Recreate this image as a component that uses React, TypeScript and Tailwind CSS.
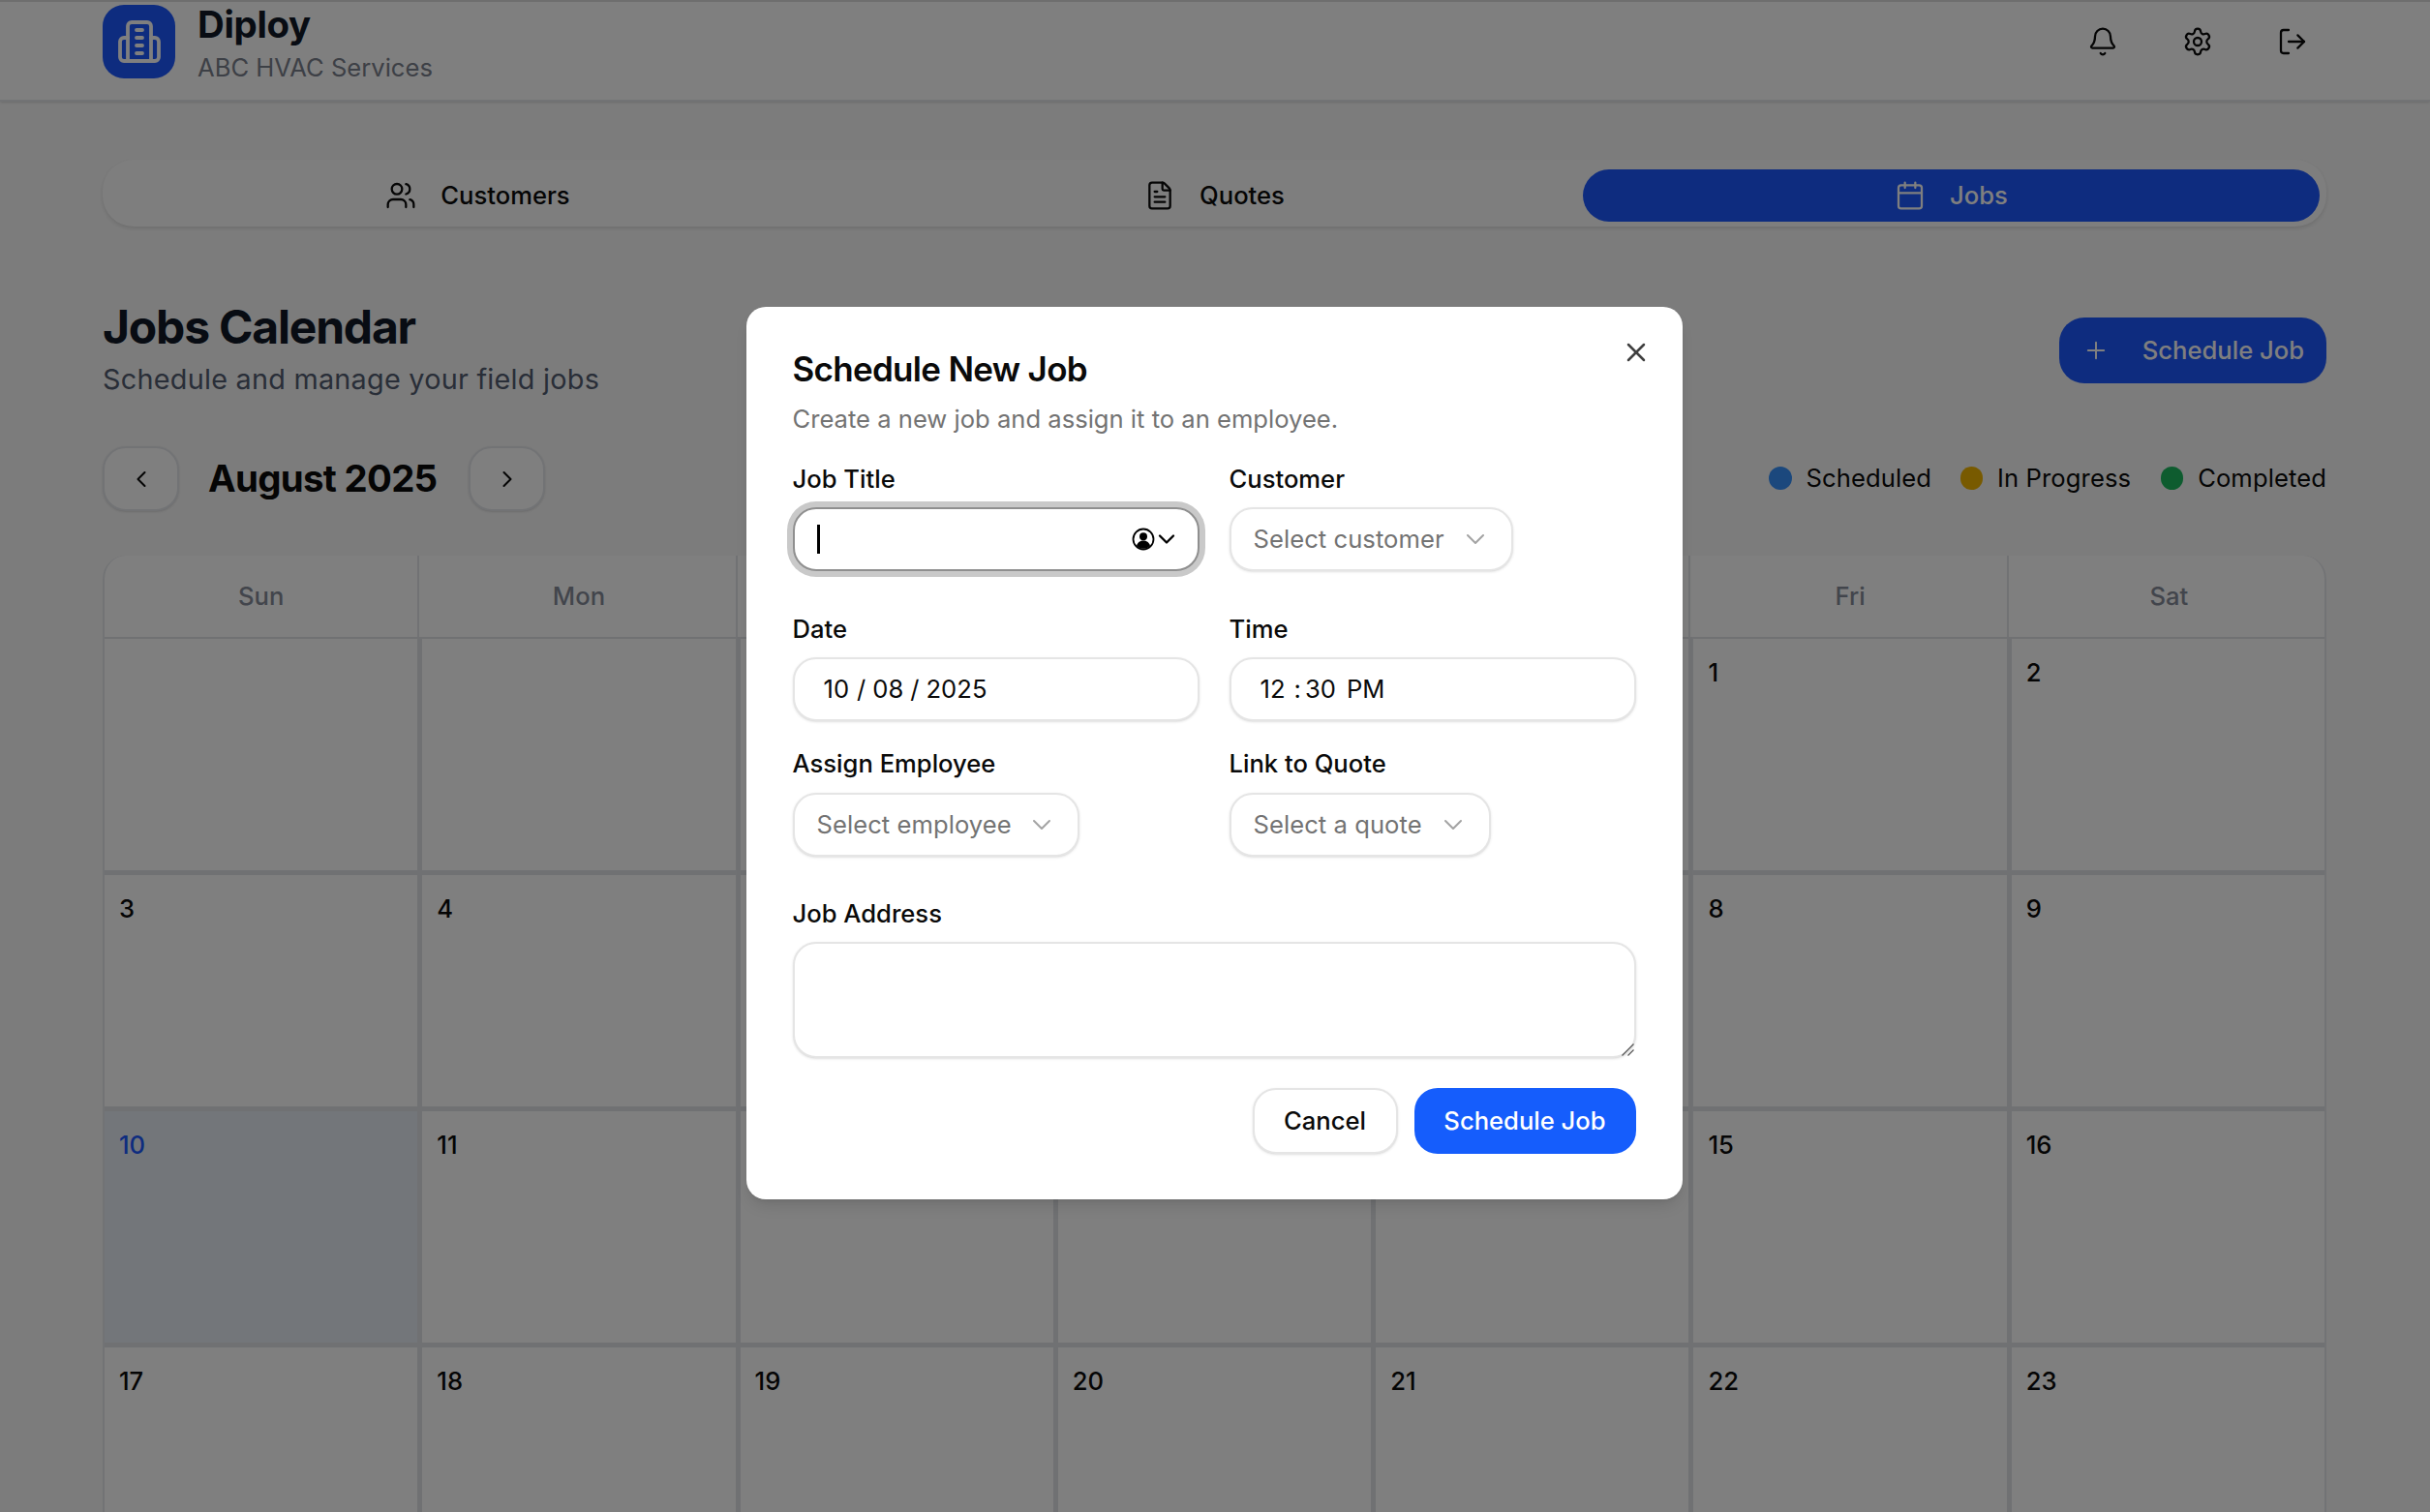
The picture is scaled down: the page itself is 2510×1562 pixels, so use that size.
import { Bell, Calendar, ChevronDown, ChevronLeft, ChevronRight, FileText, LogOut, Plus, Settings, Users, X } from 'lucide-react';
import type { ReactNode } from 'react';

const days = ['Sun', 'Mon', 'Tue', 'Wed', 'Thu', 'Fri', 'Sat'];
const cells = [null, null, null, null, null, 1, 2, 3, 4, 5, 6, 7, 8, 9, 10, 11, 12, 13, 14, 15, 16, 17, 18, 19, 20, 21, 22, 23];

const Logo = () => (
  <svg width="48" height="48" viewBox="0 0 24 24" fill="none" stroke="white" strokeWidth="1.9" strokeLinecap="round" strokeLinejoin="round">
    <path d="M6 22V4a2 2 0 0 1 2-2h8a2 2 0 0 1 2 2v18Z" />
    <path d="M6 10H4a2 2 0 0 0-2 2v8a2 2 0 0 0 2 2h2" />
    <path d="M18 10h2a2 2 0 0 1 2 2v8a2 2 0 0 1-2 2h-2" />
    <path d="M10.5 6h3M10.5 10h3M10.5 14h3M10.5 18h3" />
  </svg>
);

const Label = ({ children }: { children: string }) => (
  <div className="text-[25.6px] leading-[36px] font-medium text-[#0a0a0a]">{children}</div>
);

const SelectBox = ({ text, width }: { text: string; width: string }) => (
  <div className={`${width} h-[66px] flex items-center justify-between pl-[23px] pr-[21px] bg-white border-2 border-[#e5e5e5] rounded-[24px] shadow-sm text-[25.6px] text-[#737373] tracking-[0.05px]`}>
    <span>{text}</span>
    <ChevronDown size={32} strokeWidth={1.5} className="text-[#a3a3a3]" />
  </div>
);

const TextBox = ({ children }: { children: ReactNode }) => (
  <div className="w-[420px] h-[66px] flex items-center pl-[30px] bg-white border-2 border-[#e5e5e5] rounded-[24px] shadow-sm text-[25.6px] text-[#0a0a0a]">
    {children}
  </div>
);

const Modal = () => (
  <div className="absolute inset-0 bg-black/50 flex items-center justify-center pb-[6px] pr-[2px]">
    <div className="relative w-[967px] h-[922px] bg-white rounded-[20px] shadow-lg px-[48px] pt-[43px]">
      <X size={32} strokeWidth={1.9} className="absolute right-[32px] top-[31px] text-[#404040]" />
      <h2 className="text-[35px] leading-[42px] font-semibold text-[#0a0a0a] tracking-[-0.7px]">Schedule New Job</h2>
      <p className="mt-[13px] text-[25.6px] leading-[36px] text-[#737373]">Create a new job and assign it to an employee.</p>

      <div className="mt-[26px] grid grid-cols-[420px_420px] gap-x-[31px]">
        <div>
          <Label>Job Title</Label>
          <div className="mt-[11px] w-[420px] h-[66px] flex items-center justify-between pl-[23px] pr-[18px] bg-white border-2 border-[#8f8f8f] rounded-[24px] shadow-[0_0_0_6px_#c9c9c9]">
            <span className="w-[3px] h-[30px] bg-black" />
            <span className="flex items-center">
              <svg width="24" height="24" viewBox="0 0 24 24" className="-mr-[2px]">
                <circle cx="12" cy="12" r="10.5" fill="white" stroke="black" strokeWidth="1.8" />
                <circle cx="12" cy="9.2" r="4" fill="black" />
                <path d="M5 19c1-4 4-5.500 7-5.500s6 1.500 7 5.500a10 10 0 0 1-14 0Z" fill="black" />
              </svg>
              <ChevronDown size={28} strokeWidth={2} className="text-black" />
            </span>
          </div>
        </div>
        <div>
          <Label>Customer</Label>
          <div className="mt-[11px]">
            <SelectBox text="Select customer" width="w-[293px]" />
          </div>
        </div>

        <div className="mt-[42px]">
          <Label>Date</Label>
          <div className="mt-[11px]">
            <TextBox>
              <span>10</span>
              <span className="ml-[8px]">/</span>
              <span className="ml-[7px]">08</span>
              <span className="ml-[7px]">/</span>
              <span className="ml-[7px]">2025</span>
            </TextBox>
          </div>
        </div>
        <div className="mt-[42px]">
          <Label>Time</Label>
          <div className="mt-[11px]">
            <TextBox>
              <span>12</span>
              <span className="ml-[9px]">:</span>
              <span className="ml-[4px]">30</span>
              <span className="ml-[11px]">PM</span>
            </TextBox>
          </div>
        </div>

        <div className="mt-[26px]">
          <Label>Assign Employee</Label>
          <div className="mt-[12px]">
            <SelectBox text="Select employee" width="w-[296px]" />
          </div>
        </div>
        <div className="mt-[26px]">
          <Label>Link to Quote</Label>
          <div className="mt-[12px]">
            <SelectBox text="Select a quote" width="w-[270px]" />
          </div>
        </div>
      </div>

      <div className="mt-[41px]">
        <Label>Job Address</Label>
        <div className="relative mt-[11px]">
          <textarea className="block w-[871px] h-[120px] resize-none bg-white border-2 border-[#e5e5e5] rounded-[24px] shadow-sm outline-none" />
          <svg width="13" height="13" viewBox="0 0 13 13" className="absolute right-[2px] bottom-[2px]" stroke="#555555" strokeWidth="1.2">
            <path d="M12.500 0.500 0.500 12.500M12.500 6.500 6.500 12.500" />
          </svg>
        </div>
      </div>

      <div className="mt-[31px] flex justify-end gap-[17px]">
        <div className="w-[150px] h-[68px] flex items-center justify-center bg-white border-2 border-[#e5e5e5] rounded-[24px] shadow-sm text-[25.6px] font-medium text-[#0a0a0a]">Cancel</div>
        <div className="w-[229px] h-[68px] flex items-center justify-center bg-[#155dfc] rounded-[24px] text-[25.6px] font-medium text-white">Schedule Job</div>
      </div>
    </div>
  </div>
);

const App = () => (
  <div className="relative h-[1562px] overflow-hidden bg-[#f9f9f9] [font-family:Inter,sans-serif]">
    <header className="h-[105px] flex justify-between bg-white border-t-2 border-b-2 border-t-[#dcdcdc] border-b-[#e5e7eb] shadow-sm pl-[106px] pr-[126px]">
      <div className="flex gap-[23px]">
        <div className="mt-[3px] w-[75px] h-[76px] flex items-center justify-center bg-[#1c58fe] rounded-[22px]">
          <Logo />
        </div>
        <div className="pt-[1px]">
          <div className="text-[38.4px] leading-[44px] font-bold text-[#111827] tracking-[-0.3px]">Diploy</div>
          <div className="mt-[5px] text-[25.6px] leading-[36px] text-[#7a808c]">ABC HVAC Services</div>
        </div>
      </div>
      <div className="flex items-start gap-[66px] pt-[25px] text-[#0a0a0a]">
        <Bell size={32} strokeWidth={1.7} />
        <Settings size={32} strokeWidth={1.7} />
        <LogOut size={32} strokeWidth={1.7} />
      </div>
    </header>

    <main className="pl-[106px] pr-[107px]">
      <nav className="mt-[60px] h-[69px] grid grid-cols-3 pt-[10px] pb-[5px] pl-[7px] pr-[7px] bg-[#fdfdfd] rounded-[32px] shadow-[0_2px_4px_rgba(0,0,0,0.12)]">
        <div className="flex items-center justify-center gap-[25px] text-[25.6px] font-medium text-[#0a0a0a]">
          <Users size={32} strokeWidth={1.7} />
          Customers
        </div>
        <div className="flex items-center justify-center gap-[25px] text-[25.6px] font-medium text-[#0a0a0a]">
          <FileText size={32} strokeWidth={1.7} />
          Quotes
        </div>
        <div className="flex items-center justify-center gap-[25px] bg-[#1c58fe] rounded-[27px] text-[25.6px] font-medium text-white">
          <Calendar size={32} strokeWidth={1.7} />
          Jobs
        </div>
      </nav>

      <section className="mt-[75px] flex justify-between items-start">
        <div>
          <h1 className="text-[48px] leading-[58px] font-bold text-[#111827] tracking-[-1.2px]">Jobs Calendar</h1>
          <p className="mt-[5px] text-[28.8px] leading-[40px] text-[#525c70] tracking-[0.25px]">Schedule and manage your field jobs</p>
        </div>
        <div className="mt-[19px] w-[276px] h-[68px] flex items-center justify-between pl-[24px] pr-[23px] bg-[#1c58fe] rounded-[26px] text-[25.6px] font-medium text-white">
          <Plus size={28} strokeWidth={1.7} />
          Schedule Job
        </div>
      </section>

      <section className="mt-[49px] h-[67px] flex justify-between items-center">
        <div className="flex items-center">
          <div className="w-[79px] h-[67px] flex items-center justify-center bg-white border-2 border-[#e5e7eb] rounded-[24px] shadow-sm text-[#0a0a0a]">
            <ChevronLeft size={28} strokeWidth={1.8} />
          </div>
          <div className="ml-[30px] mr-[33px] text-[38.4px] font-bold text-[#0a0a0a] tracking-[-0.7px]">August 2025</div>
          <div className="w-[79px] h-[67px] flex items-center justify-center bg-white border-2 border-[#e5e7eb] rounded-[24px] shadow-sm text-[#0a0a0a]">
            <ChevronRight size={28} strokeWidth={1.8} />
          </div>
        </div>
        <div className="flex items-center text-[25.6px] text-[#0a0a0a] tracking-[0.1px]">
          <span className="w-[24px] h-[24px] rounded-full bg-[#3690fa]" />
          <span className="ml-[14px]">Scheduled</span>
          <span className="ml-[30px] w-[23px] h-[24px] rounded-full bg-[#f0b400]" />
          <span className="ml-[15px]">In Progress</span>
          <span className="ml-[31px] w-[23px] h-[24px] rounded-full bg-[#1cb85f]" />
          <span className="ml-[15px]">Completed</span>
        </div>
      </section>

      <section className="mt-[46px] rounded-t-[24px] overflow-hidden bg-[#e0e2e6] border-x-2 border-[#e5e7eb]">
        <div className="grid grid-cols-7 gap-[5px] h-[84px] bg-white">
          {days.map((day) => (
            <div key={day} className="-mr-[2px] flex items-center justify-center border-r-2 border-[#e2e4e8] last:border-r-0 text-[25.6px] font-medium text-[#858b98]">
              {day}
            </div>
          ))}
        </div>
        <div className="grid grid-cols-7 gap-[5px] pt-[2px]">
          {cells.map((day, i) => (
            <div key={i} className={`h-[239px] pl-[15px] pt-[17px] text-[25.6px] leading-[36px] font-medium ${day === 10 ? 'bg-[#e7ecf5] text-[#1c58fe]' : 'bg-white text-[#0a0a0a]'}`}>
              {day}
            </div>
          ))}
        </div>
      </section>
    </main>

    <Modal />
  </div>
);

export default App;
